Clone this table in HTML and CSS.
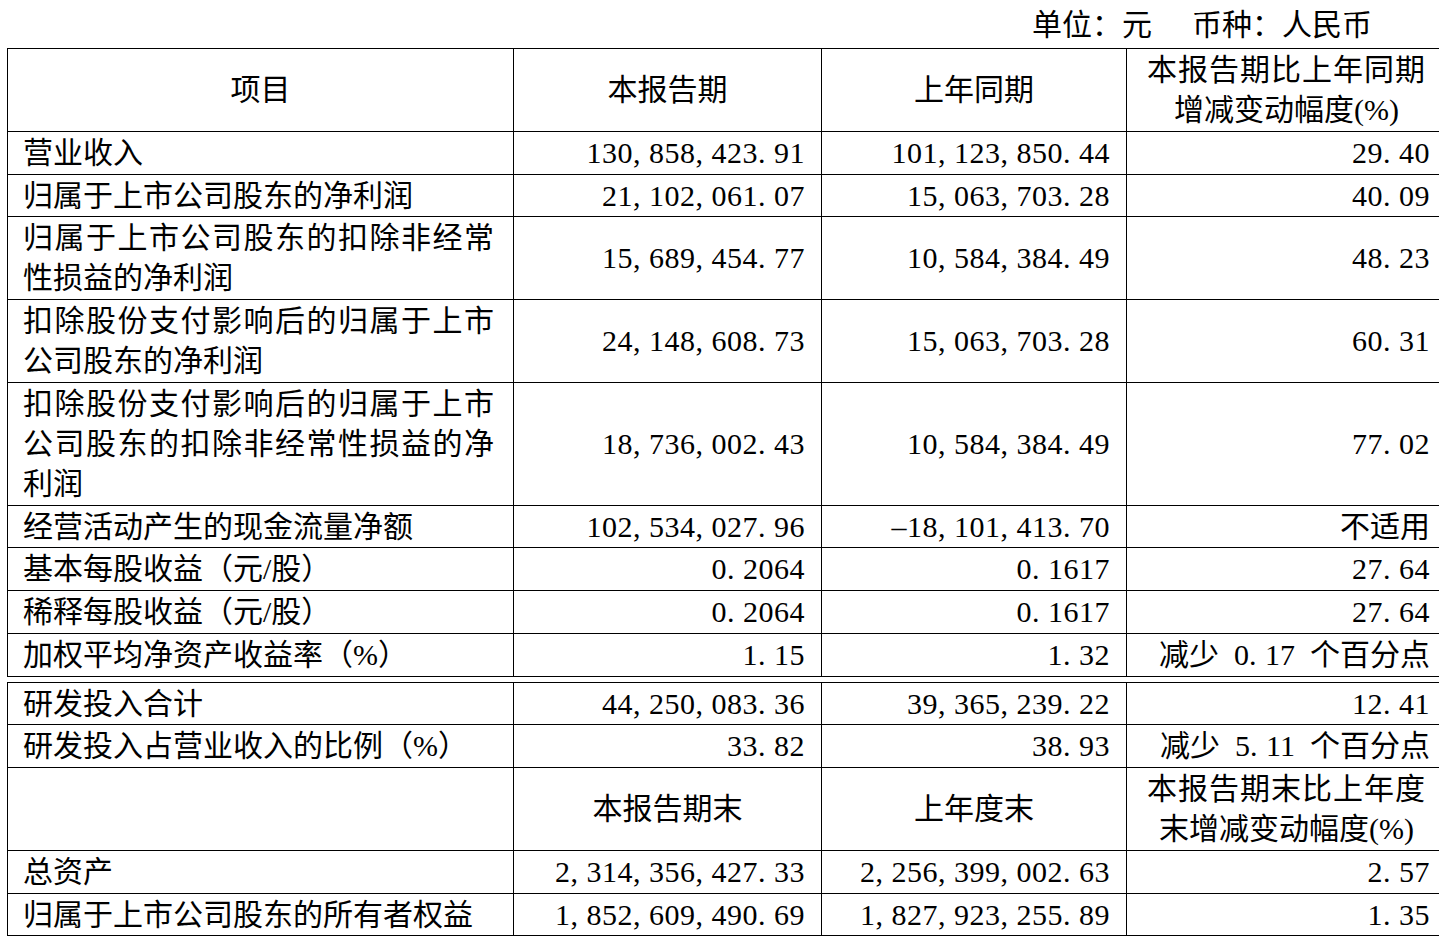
FILE: index.html
```html
<!DOCTYPE html>
<html lang="zh-CN">
<head>
<meta charset="utf-8">
<title>主要会计数据</title>
<link rel="stylesheet" href="styles.css">
</head>
<body>
<div class="unit"><span>单位：元</span><span>币种：人民币</span></div>
<table class="fin">
  <colgroup><col class="c1"><col class="c2"><col class="c3"><col class="c4"></colgroup>
  <tr class="head">
    <td class="ctr">项目</td>
    <td class="ctr">本报告期</td>
    <td class="ctr">上年同期</td>
    <td class="ctr"><span class="wide">本报告期比上年同期</span><br>增减变动幅度(%)</td>
  </tr>
  <tr><td class="item">营业收入</td><td class="num">130<span class="p">,</span>858<span class="p">,</span>423<span class="p">.</span>91</td><td class="num">101<span class="p">,</span>123<span class="p">,</span>850<span class="p">.</span>44</td><td class="num">29<span class="p">.</span>40</td></tr>
  <tr><td class="item">归属于上市公司股东的净利润</td><td class="num">21<span class="p">,</span>102<span class="p">,</span>061<span class="p">.</span>07</td><td class="num">15<span class="p">,</span>063<span class="p">,</span>703<span class="p">.</span>28</td><td class="num">40<span class="p">.</span>09</td></tr>
  <tr><td class="item">归属于上市公司股东的扣除非经常性损益的净利润</td><td class="num">15<span class="p">,</span>689<span class="p">,</span>454<span class="p">.</span>77</td><td class="num">10<span class="p">,</span>584<span class="p">,</span>384<span class="p">.</span>49</td><td class="num">48<span class="p">.</span>23</td></tr>
  <tr><td class="item">扣除股份支付影响后的归属于上市公司股东的净利润</td><td class="num">24<span class="p">,</span>148<span class="p">,</span>608<span class="p">.</span>73</td><td class="num">15<span class="p">,</span>063<span class="p">,</span>703<span class="p">.</span>28</td><td class="num">60<span class="p">.</span>31</td></tr>
  <tr><td class="item">扣除股份支付影响后的归属于上市公司股东的扣除非经常性损益的净利润</td><td class="num">18<span class="p">,</span>736<span class="p">,</span>002<span class="p">.</span>43</td><td class="num">10<span class="p">,</span>584<span class="p">,</span>384<span class="p">.</span>49</td><td class="num">77<span class="p">.</span>02</td></tr>
  <tr><td class="item">经营活动产生的现金流量净额</td><td class="num">102<span class="p">,</span>534<span class="p">,</span>027<span class="p">.</span>96</td><td class="num">–18<span class="p">,</span>101<span class="p">,</span>413<span class="p">.</span>70</td><td class="num txt">不适用</td></tr>
  <tr><td class="item">基本每股收益（元/股）</td><td class="num">0<span class="p">.</span>2064</td><td class="num">0<span class="p">.</span>1617</td><td class="num">27<span class="p">.</span>64</td></tr>
  <tr><td class="item">稀释每股收益（元/股）</td><td class="num">0<span class="p">.</span>2064</td><td class="num">0<span class="p">.</span>1617</td><td class="num">27<span class="p">.</span>64</td></tr>
  <tr><td class="item">加权平均净资产收益率（%）</td><td class="num">1<span class="p">.</span>15</td><td class="num">1<span class="p">.</span>32</td><td class="num txt">减少&ensp;0<span class="p">.</span>17&ensp;个百分点</td></tr>
</table>
<table class="fin second">
  <colgroup><col class="c1"><col class="c2"><col class="c3"><col class="c4"></colgroup>
  <tr><td class="item">研发投入合计</td><td class="num">44<span class="p">,</span>250<span class="p">,</span>083<span class="p">.</span>36</td><td class="num">39<span class="p">,</span>365<span class="p">,</span>239<span class="p">.</span>22</td><td class="num">12<span class="p">.</span>41</td></tr>
  <tr><td class="item">研发投入占营业收入的比例（%）</td><td class="num">33<span class="p">.</span>82</td><td class="num">38<span class="p">.</span>93</td><td class="num txt">减少&ensp;5<span class="p">.</span>11&ensp;个百分点</td></tr>
  <tr class="head">
    <td class="item"></td>
    <td class="ctr">本报告期末</td>
    <td class="ctr">上年度末</td>
    <td class="ctr"><span class="wide">本报告期末比上年度</span><br>末增减变动幅度(%)</td>
  </tr>
  <tr><td class="item">总资产</td><td class="num">2<span class="p">,</span>314<span class="p">,</span>356<span class="p">,</span>427<span class="p">.</span>33</td><td class="num">2<span class="p">,</span>256<span class="p">,</span>399<span class="p">,</span>002<span class="p">.</span>63</td><td class="num">2<span class="p">.</span>57</td></tr>
  <tr><td class="item">归属于上市公司股东的所有者权益</td><td class="num">1<span class="p">,</span>852<span class="p">,</span>609<span class="p">,</span>490<span class="p">.</span>69</td><td class="num">1<span class="p">,</span>827<span class="p">,</span>923<span class="p">,</span>255<span class="p">.</span>89</td><td class="num">1<span class="p">.</span>35</td></tr>
</table>
</body>
</html>
```
FILE: styles.css
```css
html, body {
  margin: 0;
  padding: 0;
  background: #fff;
  overflow: hidden;
}
body {
  padding-left: 7px;
  font-family: "Liberation Serif", "Noto Sans CJK SC", serif;
  font-size: 30px;
  color: #000;
}
.unit {
  display: flex;
  justify-content: flex-end;
  gap: 40px;
  width: 1365px;
  height: 48px;
  line-height: 50px;
}
.fin {
  border-collapse: collapse;
  table-layout: fixed;
  width: 1439px;
}
.fin col.c1 { width: 506px; }
.fin col.c2 { width: 308px; }
.fin col.c3 { width: 305px; }
.fin col.c4 { width: 320px; }
.fin td {
  border: 1px solid #000;
  padding: 1px 16px 0.75px 16px;
  line-height: 40px;
  vertical-align: middle;
  text-align: left;
  white-space: nowrap;
}
.fin td.item {
  padding-left: 15px;
  padding-right: 19px;
  white-space: normal;
  text-align: justify;
  word-break: break-all;
}
.fin td.num {
  text-align: right;
  letter-spacing: 0.5px;
}
.fin td.num.txt { letter-spacing: 0; }
.fin td.ctr { text-align: center; }
.wide { letter-spacing: 1px; }
.second { margin-top: 5px; }
.p {
  display: inline-block;
  width: 16px;
  text-align: left;
}
```
